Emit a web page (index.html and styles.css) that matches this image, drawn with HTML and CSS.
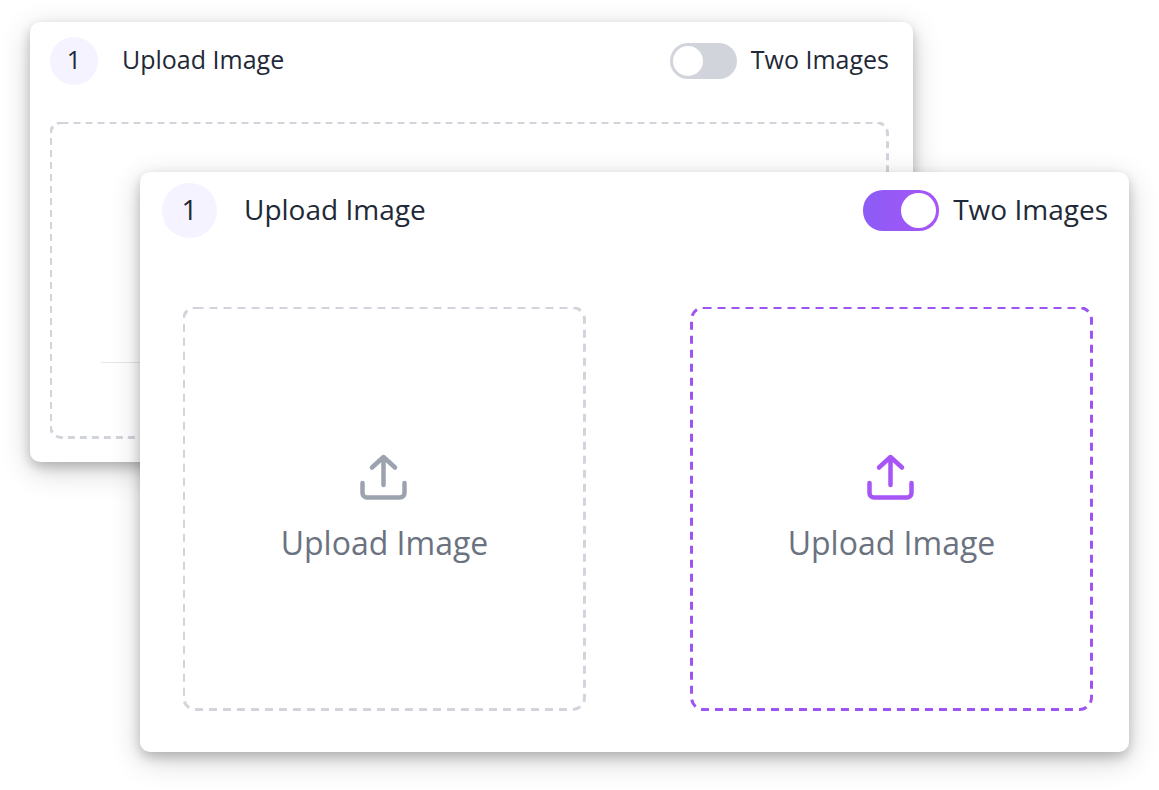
FILE: index.html
```
<!DOCTYPE html>
<html lang="en">
<head>
    <meta charset="UTF-8">
    <meta name="viewport" content="width=device-width, initial-scale=1.0">
    <title>Upload Image</title>
    <link rel="stylesheet" href="styles.css">
</head>
<body>
  <main class="stage">
    <!-- Single image card -->
    <section class="card card-back">
      <header class="card-header">
        <span class="step">1</span>
        <h2 class="card-title">Upload Image</h2>
        <label class="switch-label" for="two-images-off">
          <input type="checkbox" class="switch" id="two-images-off">
          <span class="switch-text">Two Images</span>
        </label>
      </header>
      <div class="dropzone">
        <svg class="outline" aria-hidden="true"><rect rx="11" /></svg>
        <hr class="divider">
      </div>
    </section>

    <!-- Two images card -->
    <section class="card card-front">
      <header class="card-header">
        <span class="step">1</span>
        <h2 class="card-title">Upload Image</h2>
        <label class="switch-label" for="two-images-on">
          <input type="checkbox" class="switch" id="two-images-on" checked>
          <span class="switch-text">Two Images</span>
        </label>
      </header>
      <div class="dropzones">
        <button type="button" class="dropzone">
          <svg class="outline" aria-hidden="true"><rect rx="12" /></svg>
          <svg class="upload-icon" viewBox="0 0 48 48" aria-hidden="true">
            <path d="M3.5 30v10a4.5 4.5 0 0 0 4.5 4.5h33a4.5 4.5 0 0 0 4.5-4.5V30M24.5 4v28M13 14.5L24.5 4L36 14.5" />
          </svg>
          <span>Upload Image</span>
        </button>
        <button type="button" class="dropzone active">
          <svg class="outline" aria-hidden="true"><rect rx="12" /></svg>
          <svg class="upload-icon" viewBox="0 0 48 48" aria-hidden="true">
            <path d="M3.5 30v10a4.5 4.5 0 0 0 4.5 4.5h33a4.5 4.5 0 0 0 4.5-4.5V30M24.5 4v28M13 14.5L24.5 4L36 14.5" />
          </svg>
          <span>Upload Image</span>
        </button>
      </div>
    </section>
  </main>
</body>
</html>
```
FILE: styles.css
```
* {
  box-sizing: border-box;
  margin: 0;
  padding: 0;
}

body {
  font-family: "Open Sans", "Noto Sans", sans-serif;
  color: #1f2937;
  background-color: #fff;
}

/* The two cards share the middle cell of the grid */
.stage {
  display: grid;
  grid-template-columns: 110px 1fr 216px;
  grid-template-rows: 150px 290px auto;
  padding: 22px 30px 38px;
}

.card {
  background-color: #fff;
  border-radius: 10px;
  box-shadow: 0 5px 12px rgba(0, 0, 0, 0.2), 0 8px 30px rgba(0, 0, 0, 0.19);
}

.card-back {
  grid-column: 1 / 3;
  grid-row: 1 / 3;
  display: flex;
  flex-direction: column;
  padding: 15px 24px 23px 20px;
  font-size: 25px;
}

.card-front {
  grid-column: 2 / 4;
  grid-row: 2 / 4;
  z-index: 1;
  padding: 11px 21px 41px 22px;
  font-size: 28px;
}

/* Header */

.card-header {
  display: flex;
  align-items: center;
  line-height: 1;
}

.step,
.card-title,
.switch-text {
  padding-bottom: 3px;
}

.step {
  display: flex;
  align-items: center;
  justify-content: center;
  width: 48px;
  height: 48px;
  margin-right: 24px;
  border-radius: 50%;
  background-color: #f5f3ff;
}

.card-front .step {
  width: 55px;
  height: 55px;
  margin-right: 27px;
}

.card-title {
  font-size: inherit;
  font-weight: normal;
}

.switch-label {
  display: flex;
  align-items: center;
  gap: 14px;
  margin-left: auto;
  cursor: pointer;
}

.switch {
  appearance: none;
  display: flex;
  align-items: center;
  width: 67px;
  height: 36px;
  padding: 0 3px;
  border-radius: 20px;
  background-color: #d1d5db;
  cursor: pointer;
}

.switch::before {
  content: "";
  width: 30px;
  height: 30px;
  border-radius: 50%;
  background-color: #fff;
}

.card-front .switch {
  width: 76px;
  height: 41px;
}

.card-front .switch::before {
  width: 35px;
  height: 35px;
}

.switch:checked {
  justify-content: flex-end;
  background: linear-gradient(to right, #8b5cf6, #a855f7);
}

/* Drop zones */

.dropzone {
  position: relative;
  display: flex;
  flex-direction: column;
  align-items: center;
  justify-content: center;
  border: none;
  background: none;
  color: #6b7280;
  font-family: inherit;
  font-size: 32px;
}

.card-back .dropzone {
  flex: 1;
  margin-top: 37px;
  padding: 0 51px;
}

.dropzones {
  display: grid;
  grid-template-columns: 1fr 1fr;
  gap: 104px;
  margin: 69px 15px 0 21px;
}

.dropzones .dropzone {
  min-height: 404px;
  gap: 20px;
  line-height: 44px;
  cursor: pointer;
}

.outline {
  position: absolute;
  inset: 0;
  width: 100%;
  height: 100%;
}

.outline rect {
  x: 0.5px;
  y: 0.5px;
  width: calc(100% - 2px);
  height: calc(100% - 2px);
  fill: none;
  stroke: #d1d5db;
  stroke-width: 3;
  stroke-dasharray: 7 5;
}

.dropzones .outline rect {
  stroke-dasharray: 8 6;
}

.active .outline rect {
  x: 1.5px;
  width: calc(100% - 3px);
  stroke: #9d54f2;
}

.divider {
  width: 100%;
  margin-top: 164px;
  border: none;
  border-top: 1px solid #e5e7eb;
}

.upload-icon {
  width: 48px;
  height: 48px;
  margin-right: 4px;
  fill: none;
  stroke: #9ca3af;
  stroke-width: 4.5;
  stroke-linecap: round;
  stroke-linejoin: round;
}

.active .upload-icon {
  stroke: #a855f7;
}
```
